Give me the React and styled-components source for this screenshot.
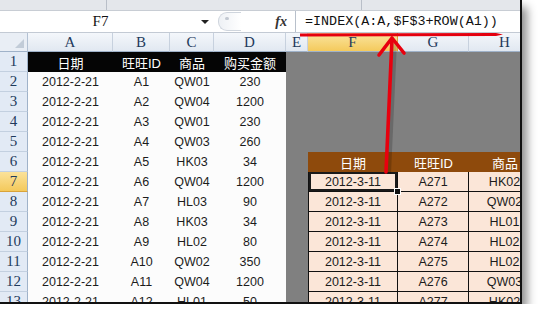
import React from "react";
import styled, { createGlobalStyle, css } from "styled-components";

const Global = createGlobalStyle`
  html, body { margin: 0; padding: 0; background: #fff; }
`;

const Frame = styled.div`
  position: relative;
  width: 520px;
  height: 302px;
  border-right: 2px solid #111;
  border-bottom: 2px solid #111;
  box-shadow: 5px 7px 9px rgba(0, 0, 0, 0.45);
  overflow: hidden;
  background: #fff;
  display: flex;
  flex-direction: column;
`;

const TopStrip = styled.div`
  height: 10px;
  flex: none;
  display: flex;
  background: #e4e7eb;
  border-bottom: 1px solid #c8cdd4;
`;

const StripPart = styled.div`
  width: ${(p) => p.w}px;
  border-right: 1px solid #b9bfc8;
`;

const FormulaBar = styled.div`
  height: 21px;
  flex: none;
  display: flex;
  align-items: stretch;
  background: #fff;
  border-bottom: 1px solid #c3cad4;
`;

const NameBox = styled.div`
  width: 215px;
  display: flex;
  align-items: center;
  position: relative;
  font-family: "Liberation Serif", serif;
  font-size: 15px;
  color: #111;
`;

const NameText = styled.span`
  flex: 1;
  text-align: center;
`;

const DropArrow = styled.span`
  width: 0;
  height: 0;
  margin-right: 6px;
  border-left: 4px solid transparent;
  border-right: 4px solid transparent;
  border-top: 4px solid #222;
`;

const Middle = styled.div`
  width: 80px;
  display: flex;
  align-items: center;
  justify-content: space-between;
  padding: 0 8px 0 3px;
  box-sizing: border-box;
`;

const Pill = styled.div`
  width: 22px;
  height: 17px;
  border-radius: 9px 0 0 9px;
  border: 1px solid #cfd5dd;
  border-right: none;
  background: linear-gradient(90deg, #eef1f5, #fff);
  position: relative;
  &::after {
    content: "";
    position: absolute;
    left: 6px;
    top: 4px;
    width: 4px;
    height: 3px;
    border-radius: 2px;
    background: #c3c9d2;
  }
`;

const Fx = styled.span`
  font-family: "Liberation Serif", serif;
  font-style: italic;
  font-weight: bold;
  font-size: 14px;
  color: #333;
`;

const FormulaInput = styled.div`
  flex: 1;
  display: flex;
  align-items: center;
  padding-left: 9px;
  border-left: 1px solid #b8c0cb;
  font-family: "Liberation Mono", monospace;
  font-size: 13.4px;
  color: #111;
  white-space: nowrap;
`;

const Sheet = styled.div`
  display: grid;
  grid-template-columns: 28px 85px 57px 44px 72px 22px 90px 71px 72px;
  grid-template-rows: 19px;
  grid-auto-rows: 20px;
`;

const Corner = styled.div`
  background: #e9eef5;
  border-right: 1px solid #b3c1d3;
  border-bottom: 1px solid #9fb2c9;
  box-sizing: border-box;
  position: relative;
  &::after {
    content: "";
    position: absolute;
    right: 3px;
    bottom: 3px;
    border-left: 9px solid transparent;
    border-bottom: 9px solid #c2ccd8;
  }
`;

const ColHead = styled.div`
  box-sizing: border-box;
  display: flex;
  align-items: center;
  justify-content: center;
  font-family: "Liberation Serif", serif;
  font-size: 15px;
  color: #1e3a5c;
  border-right: 1px solid #c7d1de;
  border-bottom: 1px solid #9fb2c9;
  background: ${(p) =>
    p.active
      ? "linear-gradient(#fae5a0, #f4ca5c)"
      : "linear-gradient(#f4f7fb, #e1e8f1)"};
  ${(p) => p.active && css`border-right-color: #d9a33a;`}
`;

const RowHead = styled.div`
  box-sizing: border-box;
  display: flex;
  align-items: center;
  justify-content: center;
  font-family: "Liberation Serif", serif;
  font-size: 15px;
  color: #1e3a5c;
  border-right: 1px solid #9fb2c9;
  border-bottom: 1px solid #c3d0e0;
  background: ${(p) => (p.active ? "linear-gradient(#fbe29a, #f4c95b)" : "#e2eaf5")};
  ${(p) => p.active && css`border-bottom-color: #d9a33a;`}
`;

const Cell = styled.div`
  box-sizing: border-box;
  display: flex;
  align-items: center;
  justify-content: center;
  white-space: nowrap;
  overflow: hidden;
  position: relative;
  font-family: "Liberation Sans", "Noto Sans CJK SC", sans-serif;
  font-size: 12.5px;
  color: #1c1c1c;
  ${(p) => p.kind === "plain" && css`background: #fcfcfc;`}
  ${(p) => p.kind === "gray" && css`background: #808080;`}
  ${(p) =>
    p.kind === "black" &&
    css`
      background: #050505;
      color: #fff;
      font-size: 13px;
    `}
  ${(p) =>
    p.kind === "brown" &&
    css`
      background: #8e4a0c;
      color: #fff;
      font-size: 13px;
    `}
  ${(p) =>
    p.kind === "peach" &&
    css`
      background: #fbe6d8;
      border-right: 1px solid #111;
      border-bottom: 1px solid #111;
    `}
  ${(p) => p.first && css`border-left: 1px solid #111;`}
  ${(p) =>
    p.selected &&
    css`
      overflow: visible;
      box-shadow: inset 0 0 0 2px #1a1a1a;
    `}
`;

const Handle = styled.span`
  position: absolute;
  right: -4px;
  bottom: -4px;
  width: 5px;
  height: 5px;
  background: #111;
  border: 1px solid #fff;
  z-index: 2;
`;

const Overlay = styled.svg`
  position: absolute;
  left: 0;
  top: 0;
  pointer-events: none;
`;

const left = [
  ["A1", "QW01", "230"],
  ["A2", "QW04", "1200"],
  ["A3", "QW01", "230"],
  ["A4", "QW03", "260"],
  ["A5", "HK03", "34"],
  ["A6", "QW04", "1200"],
  ["A7", "HL03", "90"],
  ["A8", "HK03", "34"],
  ["A9", "HL02", "80"],
  ["A10", "QW02", "350"],
  ["A11", "QW04", "1200"],
  ["A12", "HL01", "50"],
];

const right = [
  ["A271", "HK02"],
  ["A272", "QW02"],
  ["A273", "HL01"],
  ["A274", "HL02"],
  ["A275", "HL02"],
  ["A276", "QW03"],
  ["A277", "HK02"],
];

const cols = ["A", "B", "C", "D", "E", "F", "G", "H"];

function rightCells(r) {
  if (r < 6) {
    return [
      <Cell key="e" kind="gray" />,
      <Cell key="f" kind="gray" />,
      <Cell key="g" kind="gray" />,
      <Cell key="h" kind="gray" />,
    ];
  }
  if (r === 6) {
    return [
      <Cell key="e" kind="gray" />,
      <Cell key="f" kind="brown">日期</Cell>,
      <Cell key="g" kind="brown">旺旺ID</Cell>,
      <Cell key="h" kind="brown">商品</Cell>,
    ];
  }
  const d = right[r - 7];
  return [
    <Cell key="e" kind="gray" />,
    <Cell key="f" kind="peach" first selected={r === 7}>
      2012-3-11
      {r === 7 && <Handle />}
    </Cell>,
    <Cell key="g" kind="peach">{d[0]}</Cell>,
    <Cell key="h" kind="peach">{d[1]}</Cell>,
  ];
}

export default function App() {
  const rows = [];
  for (let r = 1; r <= 13; r++) {
    rows.push(
      <RowHead key={"rh" + r} active={r === 7}>
        {r}
      </RowHead>
    );
    if (r === 1) {
      ["日期", "旺旺ID", "商品", "购买金额"].forEach((t) =>
        rows.push(
          <Cell key={"h" + t} kind="black">
            {t}
          </Cell>
        )
      );
    } else {
      const d = left[r - 2];
      rows.push(<Cell key={r + "a"} kind="plain">2012-2-21</Cell>);
      rows.push(<Cell key={r + "b"} kind="plain">{d[0]}</Cell>);
      rows.push(<Cell key={r + "c"} kind="plain">{d[1]}</Cell>);
      rows.push(<Cell key={r + "d"} kind="plain">{d[2]}</Cell>);
    }
    rightCells(r).forEach((c, i) => rows.push(React.cloneElement(c, { key: r + "r" + i })));
  }

  return (
    <>
      <Global />
      <Frame>
        <TopStrip>
          <StripPart w={106} />
          <StripPart w={254} />
        </TopStrip>
        <FormulaBar>
          <NameBox>
            <NameText>F7</NameText>
            <DropArrow />
          </NameBox>
          <Middle>
            <Pill />
            <Fx>fx</Fx>
          </Middle>
          <FormulaInput>=INDEX(A:A,$F$3+ROW(A1))</FormulaInput>
        </FormulaBar>
        <Sheet>
          <Corner />
          {cols.map((c) => (
            <ColHead key={c} active={c === "F"}>
              {c}
            </ColHead>
          ))}
          {rows}
        </Sheet>
        <Overlay width="520" height="302" viewBox="0 0 520 302">
          <line x1="389" y1="174" x2="395" y2="42" stroke="rgba(0,0,0,0.18)" strokeWidth="4" />
          <path d="M300 33.5 L496 33 L503 34.5 L496 36 L300 36.5 Z" fill="#e4000f" />
          <g stroke="#e8000e" strokeWidth="3.6" strokeLinecap="round" fill="none">
            <line x1="386" y1="172" x2="392" y2="39" />
            <polyline points="379,55 392,38 404,53" strokeLinejoin="round" />
          </g>
        </Overlay>
      </Frame>
    </>
  );
}
